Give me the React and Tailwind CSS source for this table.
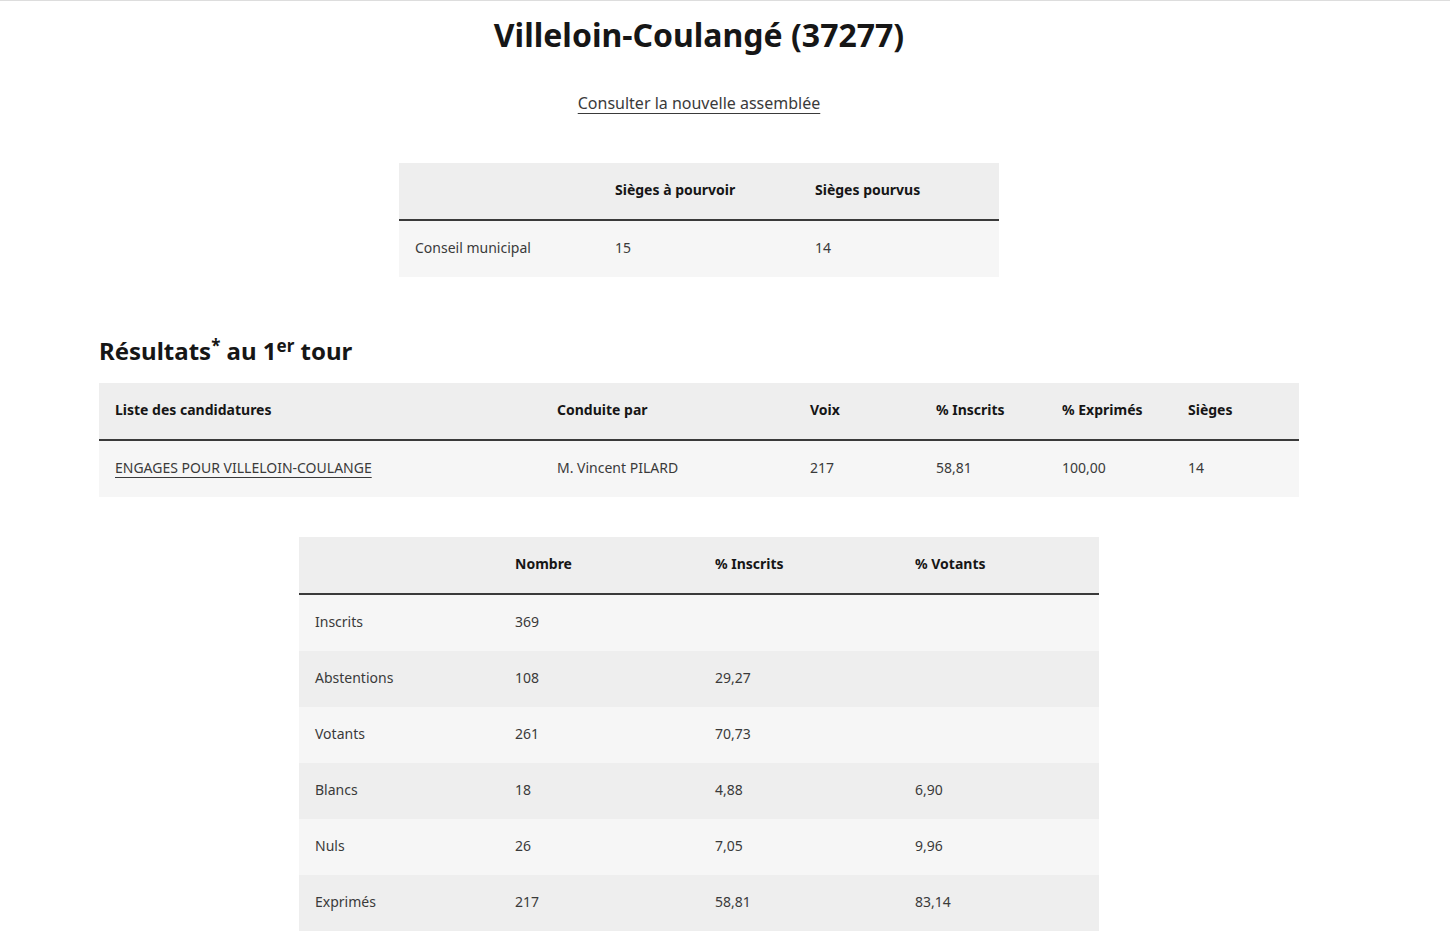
import React from "react";

const FONT = { fontFamily: "'Noto Sans', sans-serif" };

const listes = [
  { nom: "ENGAGES POUR VILLELOIN-COULANGE", tete: "M. Vincent PILARD", voix: "217", ins: "58,81", exp: "100,00", sieges: "14" },
];

const participation = [
  ["Inscrits", "369", "", ""],
  ["Abstentions", "108", "29,27", ""],
  ["Votants", "261", "70,73", ""],
  ["Blancs", "18", "4,88", "6,90"],
  ["Nuls", "26", "7,05", "9,96"],
  ["Exprimés", "217", "58,81", "83,14"],
];

function Th({ children, className = "" }) {
  return <th className={`h-14 px-4 pb-[3px] text-left text-sm font-bold text-[#161616] ${className}`}>{children}</th>;
}

function Td({ children, className = "" }) {
  return <td className={`h-14 px-4 pb-[3px] text-sm text-[#3a3a3a] ${className}`}>{children}</td>;
}

export default function App() {
  return (
    <div className="min-h-screen bg-white border-t border-[#dddddd]" style={FONT}>
      <div className="w-[1200px] ml-[99px] pb-10">
        <h1 className="pt-[14px] text-center text-[32px] leading-10 font-bold text-[#161616]">
          Villeloin-Coulangé (37277)
        </h1>

        <div className="mt-[36px] text-center">
          <a href="#" className="text-base text-[#3a3a3a] underline underline-offset-4 decoration-1">
            Consulter la nouvelle assemblée
          </a>
        </div>

        {/* sièges */}
        <table className="mt-[48px] mx-auto w-[600px] border-collapse">
          <thead>
            <tr className="h-[57px] bg-[#eeeeee] border-b-2 border-[#3a3a3a]">
              <Th className="w-[200px]"></Th>
              <Th className="w-[200px]">Sièges à pourvoir</Th>
              <Th>Sièges pourvus</Th>
            </tr>
          </thead>
          <tbody>
            <tr className="h-[57px] bg-[#f6f6f6]">
              <Td>Conseil municipal</Td>
              <Td>15</Td>
              <Td>14</Td>
            </tr>
          </tbody>
        </table>

        <h2 className="mt-[58px] text-2xl leading-8 font-bold text-[#161616]">
          Résultats<sup className="text-[17px]">*</sup> au 1<sup className="text-[17px]">er</sup> tour
        </h2>

        <table className="mt-[16px] w-full border-collapse">
          <thead>
            <tr className="h-[57px] bg-[#eeeeee] border-b-2 border-[#3a3a3a]">
              <Th className="w-[442px]">Liste des candidatures</Th>
              <Th className="w-[253px]">Conduite par</Th>
              <Th className="w-[126px]">Voix</Th>
              <Th className="w-[126px]">% Inscrits</Th>
              <Th className="w-[126px]">% Exprimés</Th>
              <Th>Sièges</Th>
            </tr>
          </thead>
          <tbody>
            {listes.map((l) => (
              <tr key={l.nom} className="h-[57px] bg-[#f6f6f6]">
                <Td>
                  <a href="#" className="underline underline-offset-4 decoration-1">{l.nom}</a>
                </Td>
                <Td>{l.tete}</Td>
                <Td>{l.voix}</Td>
                <Td>{l.ins}</Td>
                <Td>{l.exp}</Td>
                <Td>{l.sieges}</Td>
              </tr>
            ))}
          </tbody>
        </table>

        {/* participation */}
        <table className="mt-10 mx-auto w-[800px] border-collapse">
          <thead>
            <tr className="h-[57px] bg-[#eeeeee] border-b-2 border-[#3a3a3a]">
              <Th className="w-[200px]"></Th>
              <Th className="w-[200px]">Nombre</Th>
              <Th className="w-[200px]">% Inscrits</Th>
              <Th>% Votants</Th>
            </tr>
          </thead>
          <tbody>
            {participation.map((r, i) => (
              <tr
                key={r[0]}
                className={`${i === 0 ? "h-[57px]" : "h-14"} ${i % 2 === 0 ? "bg-[#f6f6f6]" : "bg-[#eeeeee]"}`}
              >
                {r.map((c, j) => (
                  <Td key={j}>{c}</Td>
                ))}
              </tr>
            ))}
          </tbody>
        </table>
      </div>
    </div>
  );
}
